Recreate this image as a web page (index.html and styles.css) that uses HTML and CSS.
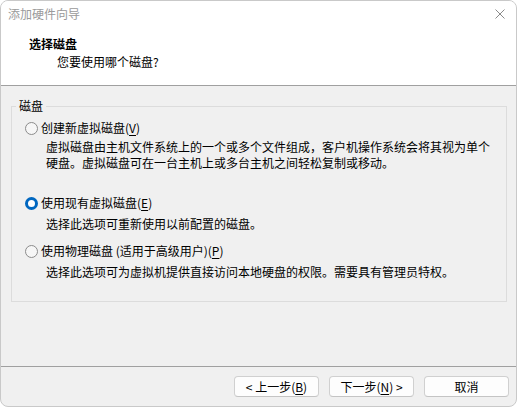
FILE: index.html
```html
<!DOCTYPE html>
<html lang="zh-CN">
<head>
<meta charset="utf-8">
<title>添加硬件向导</title>
<link rel="stylesheet" href="styles.css">
</head>
<body>
<div class="window">
  <div class="titlebar">
    <span class="title">添加硬件向导</span>
    <svg class="close" width="10" height="10" viewBox="0 0 10 10"><path d="M0.5 0.5 L9.5 9.5 M9.5 0.5 L0.5 9.5" stroke="#8a8a8a" stroke-width="1" fill="none"/></svg>
  </div>
  <div class="header">
    <div class="h-title">选择磁盘</div>
    <div class="h-sub">您要使用哪个磁盘?</div>
  </div>
  <div class="body">
    <fieldset class="group">
      <legend class="legend">磁盘</legend>
      <div class="option first">
        <span class="radio"></span>
        <span class="label">创建新虚拟磁盘(<u>V</u>)</span>
      </div>
      <div class="desc">虚拟磁盘由主机文件系统上的一个或多个文件组成，客户机操作系统会将其视为单个<br>硬盘。虚拟磁盘可在一台主机上或多台主机之间轻松复制或移动。</div>
      <div class="option second">
        <span class="radio checked"></span>
        <span class="label">使用现有虚拟磁盘(<u>E</u>)</span>
      </div>
      <div class="desc">选择此选项可重新使用以前配置的磁盘。</div>
      <div class="option third">
        <span class="radio"></span>
        <span class="label">使用物理磁盘 (适用于高级用户)(<u>P</u>)</span>
      </div>
      <div class="desc">选择此选项可为虚拟机提供直接访问本地硬盘的权限。需要具有管理员特权。</div>
    </fieldset>
  </div>
  <div class="footer">
    <button class="btn">&lt; 上一步(<u>B</u>)</button>
    <button class="btn">下一步(<u>N</u>) &gt;</button>
    <button class="btn">取消</button>
  </div>
</div>
</body>
</html>
```
FILE: styles.css
```css
html, body {
  margin: 0;
  padding: 0;
  background: #ffffff;
}
body {
  font-family: "Noto Sans CJK SC", "Noto Sans", sans-serif;
  font-size: 12px;
  line-height: 16px;
  color: #000;
}
.window {
  width: 515px;
  height: 405px;
  border: 1px solid #c9c9c9;
  border-radius: 8px;
  overflow: hidden;
  display: flex;
  flex-direction: column;
  background: #f0f0f0;
}
.titlebar {
  height: 29px;
  background: #ffffff;
  display: flex;
  align-items: flex-start;
  justify-content: space-between;
  padding: 5px 10px 0 7px;
  box-sizing: border-box;
}
.title {
  color: #9a9a9a;
}
.close {
  margin-top: 3px;
  margin-right: 1px;
}
.header {
  height: 56px;
  box-sizing: border-box;
  background: #ffffff;
  border-bottom: 1px solid #a0a0a0;
  padding: 6px 0 0 28px;
}
.h-title {
  font-weight: bold;
}
.h-sub {
  margin-top: 2px;
  padding-left: 28px;
}
.body {
  height: 281px;
  box-sizing: border-box;
  padding: 12px 9px 0 10px;
  border-bottom: 1px solid #a0a0a0;
}
.group {
  margin: 0;
  padding: 0 0 21px 0;
  border: 1px solid #dcdcdc;
  min-width: 0;
}
.legend {
  padding: 0 3px;
  margin-left: 4px;
  line-height: 16px;
}
.option {
  display: flex;
  align-items: center;
  padding-left: 13px;
  height: 16px;
}
.option.first { margin-top: 6px; }
.option.second { margin-top: 24px; }
.option.third { margin-top: 11px; }
.radio {
  width: 13px;
  height: 13px;
  box-sizing: border-box;
  border-radius: 50%;
  border: 1px solid #8b8b8b;
  background: #f6f6f6;
  margin-right: 3px;
  flex: none;
}
.radio.checked {
  border: 3px solid #0067c0;
  background: #ffffff;
}
.label u, .btn u {
  text-decoration: underline;
  text-underline-offset: 2px;
}
.desc {
  padding-left: 34px;
  margin-top: 5px;
}
.option.first + .desc { margin-top: 3px; }
.footer {
  flex: 1;
  display: flex;
  justify-content: flex-end;
  align-items: flex-start;
  gap: 10px;
  padding: 9px 7px 0 0;
}
.btn {
  width: 85px;
  height: 21px;
  box-sizing: border-box;
  border: 1px solid #d0d0d0;
  border-bottom-color: #c4c4c4;
  border-radius: 4px;
  background: #fdfdfd;
  font-family: inherit;
  font-size: 12px;
  line-height: 16px;
  color: #000;
  padding: 0;
}
```
